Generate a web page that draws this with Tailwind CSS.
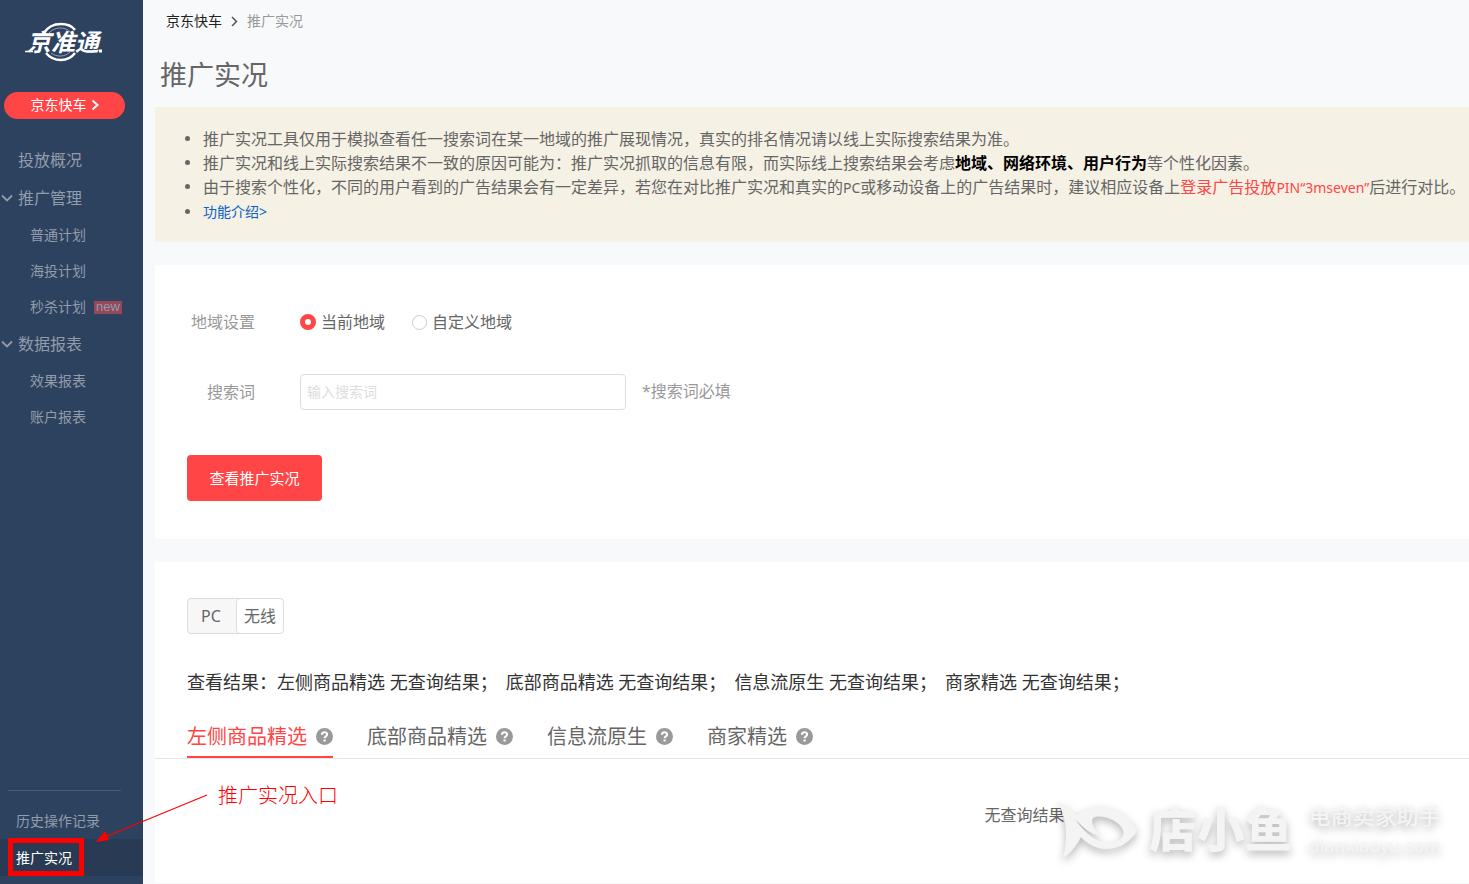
<!DOCTYPE html>
<html lang="zh-CN">
<head>
<meta charset="utf-8">
<title>推广实况</title>
<script src="https://cdn.jsdelivr.net/npm/@tailwindcss/browser@4"></script>
</head>
<body class="bg-[#f7f9fb] font-['Noto_Sans','Noto_Sans_CJK_SC',sans-serif] text-base text-[#666]">
<div class="relative flex min-h-screen overflow-hidden">

  <aside class="flex w-[143px] shrink-0 flex-col bg-[#2d425f] pb-2 text-[#929cab]">
    <a href="#" class="relative mx-auto mt-5 mr-6 block h-11 w-28" aria-label="京准通">
      <svg class="absolute left-3 top-0" width="96" height="44" viewBox="0 0 96 44" fill="none" stroke="#fff">
        <path d="M25 13C29 6.500 35 4 42 4C48 4 53 6 56 10" stroke-width="2.400"/>
        <path d="M27 33C31 38 36 40 42 40C48 40 53 37 56 33" stroke-width="2.400"/>
        <path d="M30 13C35 7 46 6 51 12M32 33C38 37.500 46 37 51 32" stroke-width="1" opacity=".5"/>
        <path d="M6 31.500h8" stroke-width="1.500"/><path d="M80 31h3" stroke-width="3"/>
      </svg>
      <span class="absolute inset-x-0 top-0 text-center text-2xl leading-[44px] font-bold text-white italic">京准通</span>
    </a>
    <button type="button" class="mt-7 ml-1 flex h-[27px] w-[121px] items-center justify-center gap-1 rounded-full bg-[#ff4545] pb-px text-sm text-white">
      京东快车
      <svg width="8" height="12" viewBox="0 0 8 12" fill="none" stroke="currentColor" stroke-width="2"><path d="M1.500 1.500L6.500 6L1.500 10.500"/></svg>
    </button>
    <nav class="mt-[22px] flex grow flex-col">
      <a href="#" class="flex h-[38px] items-center pl-[18px]">投放概况</a>
      <a href="#" class="flex h-[38px] items-center gap-[5px] pl-px">
        <svg width="12" height="8" viewBox="0 0 12 8" fill="none" stroke="currentColor" stroke-width="1.800"><path d="M1 1.500L6 6.500L11 1.500"/></svg>推广管理</a>
      <a href="#" class="flex h-9 items-center pl-[30px] text-sm">普通计划</a>
      <a href="#" class="flex h-9 items-center pl-[30px] text-sm">海投计划</a>
      <a href="#" class="flex h-9 items-center gap-2 pl-[30px] text-sm">秒杀计划<span class="h-[13px] bg-[#96475a] px-0.5 font-['Liberation_Sans',sans-serif] text-[13px] leading-[11px]">new</span></a>
      <a href="#" class="flex h-[38px] items-center gap-[5px] pl-px">
        <svg width="12" height="8" viewBox="0 0 12 8" fill="none" stroke="currentColor" stroke-width="1.800"><path d="M1 1.500L6 6.500L11 1.500"/></svg>数据报表</a>
      <a href="#" class="flex h-9 items-center pl-[30px] text-sm">效果报表</a>
      <a href="#" class="flex h-9 items-center pl-[30px] text-sm">账户报表</a>
    </nav>
    <div class="mr-[22px] ml-2 border-t border-[#475873]"></div>
    <a href="#" class="mt-3 flex h-9 items-center pl-4 text-sm">历史操作记录</a>
    <a href="#" class="relative flex h-[37px] items-center bg-[#293a54] pl-4 text-sm text-white">推广实况
      <span class="absolute -top-px left-2 h-[38px] w-[76px] border-5 border-[#f00]"></span>
      <svg class="absolute -top-[46px] left-[95px]" width="114" height="52" viewBox="0 0 114 52"><path d="M112 2L10 44" stroke="#f00" stroke-width="1.200"/><path d="M1 49L10 38L14 47Z" fill="#f00"/></svg>
      <span class="absolute -top-[59px] left-[218px] font-['Noto_Sans_CJK_SC',sans-serif] text-xl leading-[30px] font-light whitespace-nowrap text-[#f00]">推广实况入口</span>
    </a>
  </aside>

  <main class="min-w-0 grow pl-3">
    <nav class="flex h-[42px] items-center gap-[9px] pl-[11px] text-sm text-[#999]">
      <a href="#" class="text-[#222]">京东快车</a>
      <svg width="7" height="11" viewBox="0 0 7 11" fill="none" stroke="#555" stroke-width="1.500"><path d="M1 1L5.500 5.500L1 10"/></svg>
      <span>推广实况</span>
    </nav>
    <h1 class="h-[65px] pl-[5px] text-[27px] leading-[65px]">推广实况</h1>

    <ul class="bg-[#f5f1e4] pt-5 pb-[18px] pl-[30px] leading-6 whitespace-nowrap">
      <li class="flex gap-[13px]"><i class="mt-[9px] size-[5px] shrink-0 rounded-full bg-[#666]"></i><p>推广实况工具仅用于模拟查看任一搜索词在某一地域的推广展现情况，真实的排名情况请以线上实际搜索结果为准。</p></li>
      <li class="flex gap-[13px]"><i class="mt-[9px] size-[5px] shrink-0 rounded-full bg-[#666]"></i><p>推广实况和线上实际搜索结果不一致的原因可能为：推广实况抓取的信息有限，而实际线上搜索结果会考虑<b class="text-black">地域、网络环境、用户行为</b>等个性化因素。</p></li>
      <li class="flex gap-[13px]"><i class="mt-[9px] size-[5px] shrink-0 rounded-full bg-[#666]"></i><p>由于搜索个性化，不同的用户看到的广告结果会有一定差异，若您在对比推广实况和真实的<span class="text-sm leading-6">PC</span>或移动设备上的广告结果时，建议相应设备上<span class="text-[#ff4545]">登录广告投放<span class="text-sm leading-6">PIN“3mseven”</span></span>后进行对比。</p></li>
      <li class="flex gap-[13px]"><i class="mt-[9px] size-[5px] shrink-0 rounded-full bg-[#666]"></i><a href="#" class="text-sm leading-6 text-[#0a5fc4]">功能介绍&gt;</a></li>
    </ul>

    <form class="mt-[23px] bg-white pt-[39px] pb-[38px] pl-8">
      <div class="flex h-9 items-center">
        <span id="region" class="w-[113px] pr-[45px] text-right whitespace-nowrap text-[#999]">地域设置</span>
        <div role="radiogroup" aria-labelledby="region" class="flex gap-[27px]">
          <label class="flex items-center gap-[5px]"><input type="radio" name="region" checked class="size-4 appearance-none rounded-full border border-[#ccc] checked:border-5 checked:border-[#ff4545]">当前地域</label>
          <label class="flex items-center gap-[5px]"><input type="radio" name="region" class="size-[15px] appearance-none rounded-full border border-[#ccc] checked:border-5 checked:border-[#ff4545]">自定义地域</label>
        </div>
      </div>
      <div class="mt-[34px] flex h-9 items-center">
        <label for="word" class="w-[113px] pr-[45px] text-right whitespace-nowrap text-[#999]">搜索词</label>
        <input id="word" type="text" placeholder="输入搜索词" class="h-9 w-[326px] rounded border border-[#ddd] px-1.5 pb-0.5 text-sm placeholder:text-[#ddd]">
        <span class="ml-4 pb-0.5 text-[#999]">*搜索词必填</span>
      </div>
      <button type="button" class="mt-[45px] h-[46px] w-[135px] rounded bg-[#ff4545] text-[15px] text-white">查看推广实况</button>
    </form>

    <section class="mt-[23px] bg-white pt-9">
      <div class="ml-8 flex h-9 w-[97px] rounded border border-[#ddd] bg-[#f7f7f7]">
        <button type="button" class="w-12 pr-0.5">PC</button>
        <button type="button" class="-my-px -mr-px grow rounded border border-[#ddd] bg-white">无线</button>
      </div>
      <p class="mt-8 flex gap-2 pl-8 text-lg leading-8 whitespace-nowrap text-[#333]"><span>查看结果：左侧商品精选 无查询结果；</span><span>底部商品精选 无查询结果；</span><span>信息流原生 无查询结果；</span><span>商家精选 无查询结果；</span></p>
      <div class="mt-5 flex h-[41px] gap-[34px] border-b border-[#e8e8e8] pl-8 text-xl leading-9">
        <button type="button" class="flex items-center gap-[9px] border-b-2 border-[#ff4545] text-[#ff4545]">左侧商品精选<svg class="mb-0.5 size-[17px]" viewBox="0 0 17 17"><circle cx="8.500" cy="8.500" r="8.500" fill="#999"/><path d="M5.900 6.800C5.900 3.400 11.100 3.400 11.100 6.500C11.100 8.400 8.600 8.300 8.600 10.300" fill="none" stroke="#fff" stroke-width="2"/><path d="M7.500 11.500h2.200v2H7.500z" fill="#fff"/></svg></button>
        <button type="button" class="flex items-center gap-[9px] border-b-2 border-transparent">底部商品精选<svg class="mb-0.5 size-[17px]" viewBox="0 0 17 17"><circle cx="8.500" cy="8.500" r="8.500" fill="#999"/><path d="M5.900 6.800C5.900 3.400 11.100 3.400 11.100 6.500C11.100 8.400 8.600 8.300 8.600 10.300" fill="none" stroke="#fff" stroke-width="2"/><path d="M7.500 11.500h2.200v2H7.500z" fill="#fff"/></svg></button>
        <button type="button" class="flex items-center gap-[9px] border-b-2 border-transparent">信息流原生<svg class="mb-0.5 size-[17px]" viewBox="0 0 17 17"><circle cx="8.500" cy="8.500" r="8.500" fill="#999"/><path d="M5.900 6.800C5.900 3.400 11.100 3.400 11.100 6.500C11.100 8.400 8.600 8.300 8.600 10.300" fill="none" stroke="#fff" stroke-width="2"/><path d="M7.500 11.500h2.200v2H7.500z" fill="#fff"/></svg></button>
        <button type="button" class="flex items-center gap-[9px] border-b-2 border-transparent">商家精选<svg class="mb-0.5 size-[17px]" viewBox="0 0 17 17"><circle cx="8.500" cy="8.500" r="8.500" fill="#999"/><path d="M5.900 6.800C5.900 3.400 11.100 3.400 11.100 6.500C11.100 8.400 8.600 8.300 8.600 10.300" fill="none" stroke="#fff" stroke-width="2"/><path d="M7.500 11.500h2.200v2H7.500z" fill="#fff"/></svg></button>
      </div>
      <p class="pt-11 pb-14 pl-[425px] text-center leading-6">无查询结果</p>
    </section>
  </main>

  <div class="absolute right-7 bottom-6 flex items-center text-[#f4f4f4] drop-shadow-[0_4px_4px_rgba(0,0,0,0.28)]">
    <svg width="80" height="58" viewBox="0 0 80 58" fill="currentColor"><path fill-rule="evenodd" d="M0 0C8 4 14 9 20 14C30 5 46 4 56 8C68 13 76 21 80 30C74 40 64 48 48 48C40 48 30 43 24 36C20 44 14 52 6 57C10 42 12 20 0 0ZM18 18C26 30 40 44 56 42C64 40 68 34 66 29C62 20 48 14 38 16C32 18 36 28 44 35C34 34 26 26 18 18Z"/></svg>
    <span class="ml-3 pb-2 font-['Noto_Sans_CJK_SC',sans-serif] text-5xl leading-[52px] font-black">店小鱼</span>
    <span class="ml-4 flex flex-col">
      <span class="text-[22px] leading-[30px] font-medium">电商卖家助手</span>
      <span class="font-['Open_Sans',sans-serif] text-lg leading-[30px]">dianxiaoyu.com</span>
    </span>
  </div>
</div>
</body>
</html>
